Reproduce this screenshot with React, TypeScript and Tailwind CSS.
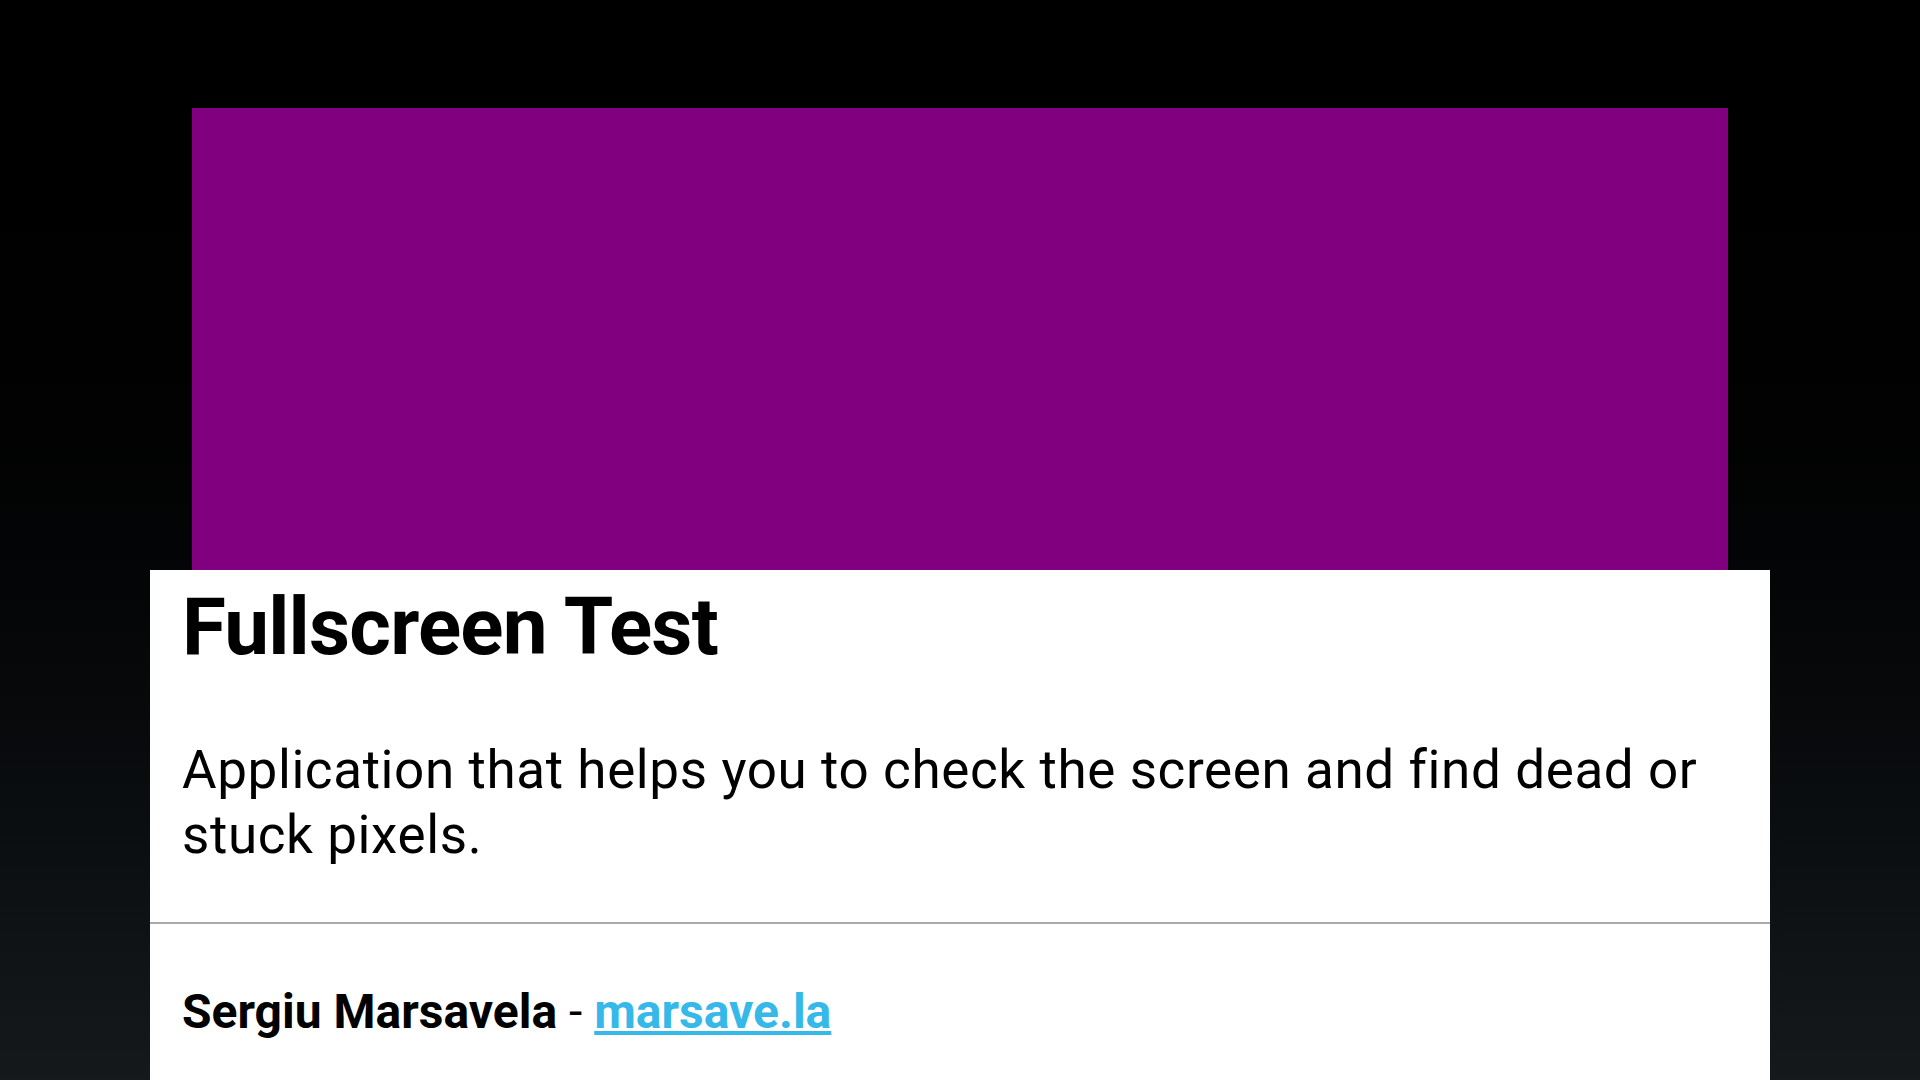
import React from 'react';

const App = () => {
  return (
    <div className="min-h-screen h-[1080px] overflow-hidden bg-gradient-to-b from-black to-[#15191c] flex flex-col items-center pt-[108px] font-['Roboto',sans-serif]">
      <div className="w-[1536px] h-[466px] bg-[#800080]" />
      <div className="w-[1620px] bg-white text-black">
        <div className="px-8 pt-[10px] pb-[54px]">
          <h1 className="text-[80px] leading-[94px] font-bold tracking-[-0.8px]">Fullscreen Test</h1>
          <p className="mt-[64px] text-[53px] leading-[65px] tracking-[0.6px]">
            Application that helps you to check the screen and find dead or stuck pixels.
          </p>
        </div>
        <div className="border-t-2 border-[#aaaaaa] px-8 pt-[60px] pb-10">
          <p className="text-[48px] leading-[56px]">
            <span className="font-bold">Sergiu Marsavela</span> -{' '}
            <a href="#" className="font-bold text-[#36b8e8] underline">
              marsave.la
            </a>
          </p>
        </div>
      </div>
    </div>
  );
};

export default App;
